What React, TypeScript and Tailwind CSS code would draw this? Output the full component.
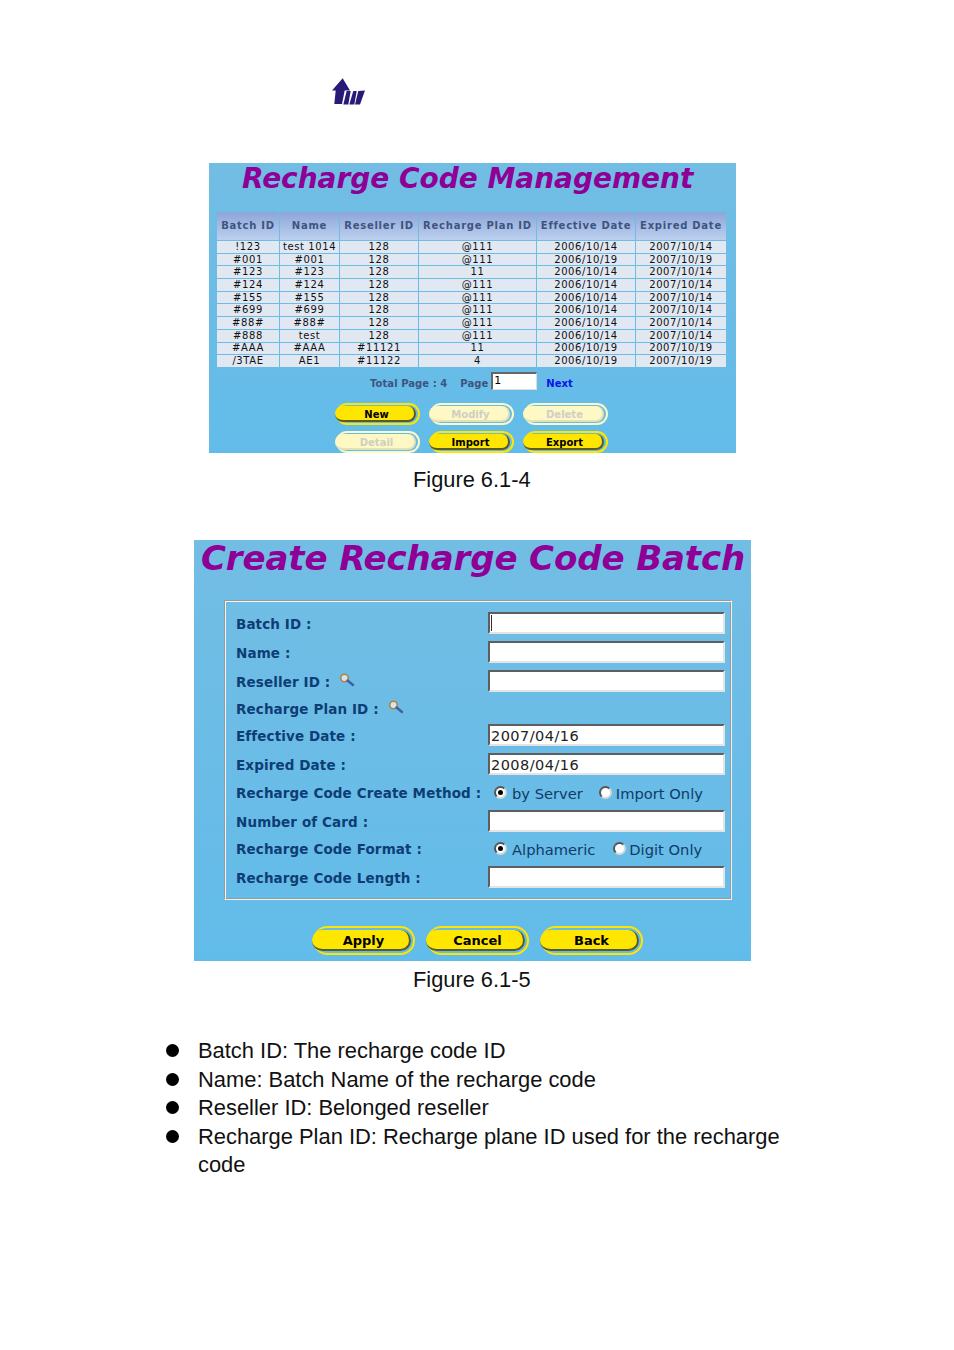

const rows = [
  ["!123", "test 1014", "128", "@111", "2006/10/14", "2007/10/14"],
  ["#001", "#001", "128", "@111", "2006/10/19", "2007/10/19"],
  ["#123", "#123", "128", "11", "2006/10/14", "2007/10/14"],
  ["#124", "#124", "128", "@111", "2006/10/14", "2007/10/14"],
  ["#155", "#155", "128", "@111", "2006/10/14", "2007/10/14"],
  ["#699", "#699", "128", "@111", "2006/10/14", "2007/10/14"],
  ["#88#", "#88#", "128", "@111", "2006/10/14", "2007/10/14"],
  ["#888", "test", "128", "@111", "2006/10/14", "2007/10/14"],
  ["#AAA", "#AAA", "#11121", "11", "2006/10/19", "2007/10/19"],
  ["/3TAE", "AE1", "#11122", "4", "2006/10/19", "2007/10/19"],
];
const heads = ["Batch ID", "Name", "Reseller ID", "Recharge Plan ID", "Effective Date", "Expired Date"];
const cols = "grid grid-cols-[62px_59px_78px_117px_98px_90px] gap-x-px";

function Logo() {
  return (
    <svg width="34" height="30" viewBox="0 0 34 30" className="ml-[332px] block">
      <path d="M10.7 0.3 L18 12.6 L12.7 12.6 L10 26 L2.3 26 L3.7 12.6 L0 12.6 Z" fill="#2a1a78" />
      <path d="M14.7 13 L18.7 13 L16.3 26.5 L11.3 26.5 Z" fill="#2a1a78" />
      <path d="M21.3 13 L24.7 13 L22.3 26.5 L17.3 26.5 Z" fill="#2a1a78" />
      <path d="M26.3 13 L33 12.6 L28 26.5 L23 26.5 Z" fill="#2a1a78" />
    </svg>
  );
}

function YellowButton({ label, disabled, big }: { label: string; disabled?: boolean; big?: boolean }) {
  const outer = big ? "w-[102px] h-[29px] py-[2px]" : "w-[84px] h-[22px] py-px";
  const border = disabled ? "border-[#fdf8c4]" : "border-[#ffe600]";
  const inner = disabled
    ? "bg-[#fdf8c4] border-[#e4e0b8] text-[#cfcfc4]"
    : "bg-[#ffe600] border-[#5a5a30] text-black";
  return (
    <div className={`${outer} ${border} rounded-full border-2 border-l-0 pr-[2px] shrink-0`}>
      <div
        className={`${inner} ${big ? "text-[13px] pl-[6px] pt-[2px]" : "text-[10px] pl-[4px] pt-[4px]"} h-full -ml-px rounded-full border-r-2 border-b-2 flex items-center justify-center font-bold font-['DejaVu_Sans',sans-serif]`}
      >
        {label}
      </div>
    </div>
  );
}

function Magnifier() {
  return (
    <svg width="16" height="14" viewBox="0 0 16 14" className="shrink-0 -mt-[4px]">
      <circle cx="5.5" cy="5" r="3.8" fill="#d7e4ee" stroke="#b0843a" strokeWidth="1.6" />
      <path d="M8.5 7.5 L14 12" stroke="#3f5fa8" strokeWidth="2.4" strokeLinecap="round" />
    </svg>
  );
}

function Field({ value, caret }: { value?: string; caret?: boolean }) {
  return (
    <div className="w-[237px] h-[22px] bg-white border-2 border-t-[#5e5e5e] border-l-[#5e5e5e] border-r-[#e4e4e4] border-b-[#e4e4e4] flex items-center pl-px pt-[3px] text-[14.5px] leading-none text-[#222] font-['DejaVu_Sans',sans-serif] tracking-[0.45px]">
      {caret && <span className="w-px h-[16px] -mt-[3px] bg-[#333]" />}
      {value}
    </div>
  );
}

function Radio({ checked }: { checked?: boolean }) {
  return (
    <span className="w-[13px] h-[13px] -mt-[3px] rounded-full bg-white border-2 border-t-[#555] border-l-[#555] border-r-[#d8d8d8] border-b-[#d8d8d8] flex items-center justify-center shrink-0">
      {checked && <span className="w-[5px] h-[5px] rounded-full bg-black" />}
    </span>
  );
}

function RadioPair({ a, b, ml, bGap }: { a: string; b: string; ml: string; bGap: string }) {
  return (
    <div className="h-[22px] pt-[4px] flex items-center text-[14.7px] leading-none text-[#123a66] font-['DejaVu_Sans',sans-serif] pl-[6px]">
      <Radio checked />
      <span className="ml-[5px]">{a}</span>
      <span className={bGap}>
        <Radio />
      </span>
      <span className={ml}>{b}</span>
    </div>
  );
}

const formRows: { label: string; h: string; extra?: boolean; right?: React.ReactNode }[] = [
  { label: "Batch ID :", h: "h-[29px]", right: <Field caret /> },
  { label: "Name :", h: "h-[29px]", right: <Field /> },
  { label: "Reseller ID :", h: "h-[27px]", extra: true, right: <Field /> },
  { label: "Recharge Plan ID :", h: "h-[27px]", extra: true },
  { label: "Effective Date :", h: "h-[29px]", right: <Field value="2007/04/16" /> },
  { label: "Expired Date :", h: "h-[28px]", right: <Field value="2008/04/16" /> },
  { label: "Recharge Code Create Method :", h: "h-[29px]", right: <RadioPair a="by Server" b="Import Only" bGap="ml-[16px] flex" ml="ml-[4px]" /> },
  { label: "Number of Card :", h: "h-[27px]", right: <Field /> },
  { label: "Recharge Code Format :", h: "h-[29px]", right: <RadioPair a="Alphameric" b="Digit Only" bGap="ml-[18px] flex" ml="ml-[3px]" /> },
  { label: "Recharge Code Length :", h: "h-[22px]", right: <Field /> },
];

const bullets = [
  "Batch ID: The recharge code ID",
  "Name: Batch Name of the recharge code",
  "Reseller ID: Belonged reseller",
  "Recharge Plan ID: Recharge plane ID used for the recharge",
];

export default function App() {
  return (
    <div className="w-[954px] h-[1350px] bg-white overflow-hidden font-['Liberation_Sans',Arial,sans-serif] text-[#111]">
      <div className="pt-[78px]">
        <Logo />
      </div>

      {/* Figure 6.1-4 */}
      <div className="mt-[55px] ml-[209px] w-[527px] h-[290px] bg-gradient-to-b from-[#72bde4] to-[#62bce9] font-['DejaVu_Sans',sans-serif]">
        <div className="h-[49px] pl-[33px] text-[28px] leading-[30px] pt-[1px] font-bold italic text-[#8e0096] tracking-[-0.02px] whitespace-nowrap">
          Recharge Code Management
        </div>
        <div className="ml-[8px] w-[509px]">
          <div className={cols}>
            {heads.map((h) => (
              <div
                key={h}
                className="h-[28px] pb-[2px] flex items-center justify-center bg-gradient-to-b from-[#8da6d8] to-[#bcd0ee] text-[10px] font-bold text-[#3d5480] tracking-[0.75px] whitespace-nowrap"
              >
                {h}
              </div>
            ))}
          </div>
          {rows.map((r, i) => (
            <div key={i} className={`${cols} mt-px`}>
              {r.map((c, j) => (
                <div
                  key={j}
                  className="h-[11.7px] leading-[12px] flex items-center justify-center bg-[#e2e8f2] text-[10px] text-[#111] tracking-[0.6px] whitespace-nowrap"
                >
                  {c}
                </div>
              ))}
            </div>
          ))}
        </div>
        <div className="flex items-center h-[18px] mt-[5px] ml-[161px] text-[10px] font-bold text-[#3d5480] tracking-[0.06px] whitespace-nowrap">
          <span className="pt-[6px]">Total Page : 4</span>
          <span className="ml-[13px] pt-[6px]">Page</span>
          <span className="ml-[3px] w-[46px] h-[18px] bg-white border-t-2 border-l-2 border-t-[#666] border-l-[#666] border-r border-b border-r-[#ddd] border-b-[#ddd] flex items-center pl-px text-[11px] font-normal text-black">
            1
          </span>
          <span className="ml-[9px] pt-[6px] text-[#0a14e6]">Next</span>
        </div>
        <div className="flex gap-[10px] ml-[127px] mt-[13px]">
          <YellowButton label="New" />
          <YellowButton label="Modify" disabled />
          <YellowButton label="Delete" disabled />
        </div>
        <div className="flex gap-[10px] ml-[127px] mt-[6px]">
          <YellowButton label="Detail" disabled />
          <YellowButton label="Import" />
          <YellowButton label="Export" />
        </div>
      </div>

      <div className="mt-[14px] h-[26px] leading-[26px] pl-[413px] text-[21.8px] whitespace-nowrap">Figure 6.1-4</div>

      {/* Figure 6.1-5 */}
      <div className="mt-[47px] ml-[194px] w-[557px] h-[421px] bg-gradient-to-b from-[#72bde4] to-[#62bce9] font-['DejaVu_Sans',sans-serif]">
        <div className="h-[60px] pl-[7px] text-[34px] leading-[36px] font-bold italic text-[#8e0096] tracking-[-0.1px] whitespace-nowrap">
          Create Recharge Code Batch
        </div>
        <div className="ml-[30px] w-[508px] h-[300px] border border-t-[#999] border-l-[#999] border-r-[#f0f0f0] border-b-[#f0f0f0] shadow-[inset_1px_1px_0_#f4f4f4,inset_-1px_-1px_0_#999] pl-[11px] pt-[11px]">
          {formRows.map((f) => (
            <div key={f.label} className={`${f.h} flex items-start`}>
              <div className="w-[252px] h-[22px] pt-[2px] flex items-center gap-[9px] text-[13.5px] font-bold text-[#0e3d75] tracking-[0.11px] whitespace-nowrap">
                <span>{f.label}</span>
                {f.extra && <Magnifier />}
              </div>
              {f.right}
            </div>
          ))}
        </div>
        <div className="flex gap-[12px] ml-[119px] mt-[26px]">
          <YellowButton big label="Apply" />
          <YellowButton big label="Cancel" />
          <YellowButton big label="Back" />
        </div>
      </div>

      <div className="mt-[6px] h-[26px] leading-[26px] pl-[413px] text-[21.8px] whitespace-nowrap">Figure 6.1-5</div>

      <ul className="mt-[44px] pl-[166px] text-[21.9px] leading-[28.5px] w-[800px]">
        {bullets.map((b) => (
          <li key={b} className="flex whitespace-nowrap">
            <span className="w-[13px] h-[13px] mt-[7px] rounded-full bg-black shrink-0" />
            <span className="ml-[19px]">{b}</span>
          </li>
        ))}
        <li className="pl-[32px]">code</li>
      </ul>
    </div>
  );
}
